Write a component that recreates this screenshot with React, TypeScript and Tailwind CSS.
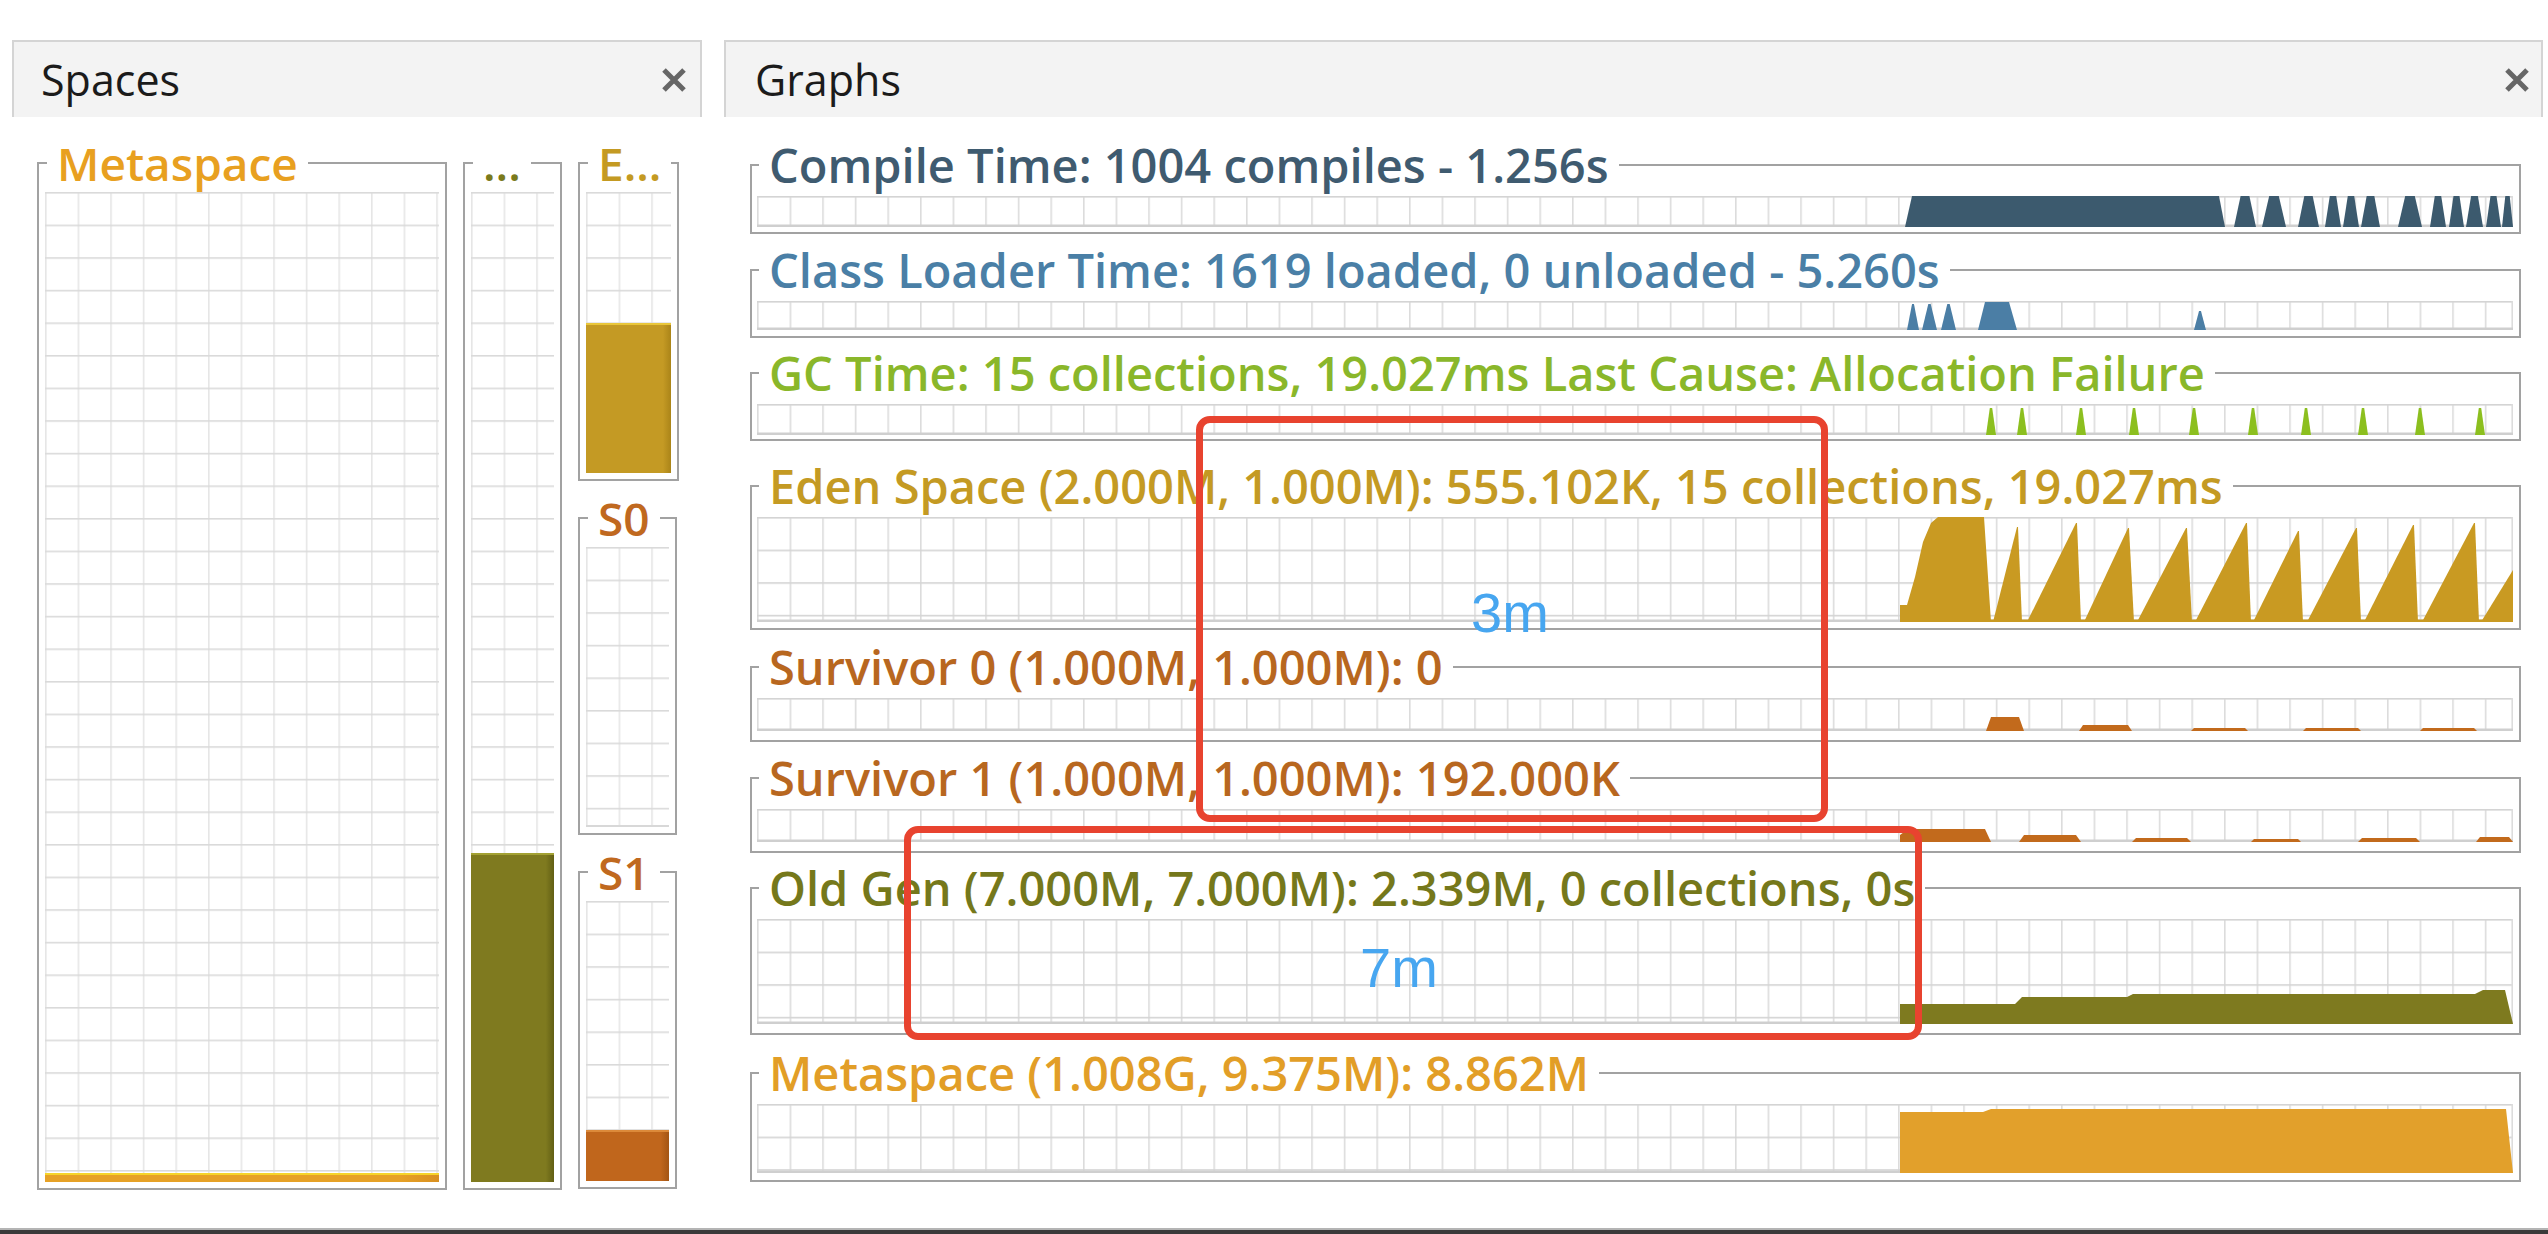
import React from "react";

const G = 32.6;
const CW = 1756;

function GridPattern({ id, v = "#dcdcdc", h = "#d4d4d4" }: { id: string; v?: string; h?: string }) {
  return (
    <pattern id={id} width={G} height={G} patternUnits="userSpaceOnUse">
      <rect x={0} y={0} width={1.6} height={G} fill={v} />
      <rect x={0} y={0} width={G} height={1.6} fill={h} />
    </pattern>
  );
}

function CloseIcon() {
  return (
    <svg width="30" height="28" viewBox="0 0 30 28" className="block">
      <path d="M5 4 L25 24 M25 4 L5 24" stroke="#666666" strokeWidth="5" fill="none" />
    </svg>
  );
}

function Chart({ id, h, color, polys }: { id: string; h: number; color: string; polys: string[] }) {
  return (
    <svg width={CW} height={h} className="block">
      <defs>
        <GridPattern id={id} />
      </defs>
      <rect x={0} y={0} width={CW} height={h} fill="#ffffff" />
      <rect x={0} y={0} width={CW} height={h} fill={`url(#${id})`} />
      <rect x={CW - 1.6} y={0} width={1.6} height={h} fill="#dcdcdc" />
      <rect x={0} y={h - 2.5} width={CW} height={2.5} fill="#cfcfcf" />
      {polys.map((p, i) => (
        <polygon key={i} points={p} fill={color} />
      ))}
    </svg>
  );
}

function trap(a: number, b: number, hgt: number, H: number, inset = 4) {
  return `${a},${H} ${a + inset},${H - hgt} ${b - inset},${H - hgt} ${b},${H}`;
}

function spike(a: number, b: number, H: number, top = 0, ratio = 0.3) {
  const w = b - a;
  return `${a},${H} ${a + w * ratio},${top} ${b - w * ratio},${top} ${b},${H}`;
}

// ---- data ----
const compilePolys = [
  "1148,31 1155,0 1462,0 1468,31",
  ...[
    [1477, 1499],
    [1505, 1529],
    [1541, 1562],
    [1568, 1584],
    [1586, 1602],
    [1604, 1623],
    [1641, 1665],
    [1673, 1689],
    [1692, 1707],
    [1709, 1726],
    [1729, 1744],
    [1745, 1756],
  ].map(([a, b]) => spike(a, b, 31, 0, 0.3)),
];

const classPolys = [
  spike(1150, 1162, 29, 3, 0.42),
  spike(1165, 1180, 29, 3, 0.42),
  spike(1184, 1199, 29, 3, 0.42),
  "1221,29 1228,1 1252,1 1260,29",
  spike(1437, 1449, 29, 10, 0.42),
];

const gcPolys = [1234, 1265, 1324, 1377, 1437, 1496, 1549, 1606, 1663, 1723].map(
  (c) => `${c - 5},31 ${c - 1.2},4 ${c + 1.2},4 ${c + 5},31`
);

const edenH = 105;
const edenPolys = [
  "1143,105 1143,88 1150,88 1158,60 1166,25 1174,6 1181,0 1227,0 1234,105",
  ...[
    [1236, 1260, 1265, 10],
    [1270, 1319, 1324, 6],
    [1327, 1371, 1377, 11],
    [1380, 1429, 1435, 11],
    [1438, 1489, 1494, 6],
    [1496, 1541, 1546, 14],
    [1550, 1599, 1604, 11],
    [1607, 1656, 1661, 8],
    [1665, 1717, 1722, 6],
  ].map(([s, p, e, y]) => `${s},${edenH} ${p},${y} ${p + 1},${y} ${e},${edenH}`),
  `1724,${edenH} 1756,53 1756,${edenH}`,
  `1143,${edenH - 2.5} 1756,${edenH - 2.5} 1756,${edenH} 1143,${edenH}`,
];

const s0Polys = [
  trap(1229, 1267, 14, 33, 5),
  trap(1322, 1375, 6, 33, 4),
  trap(1434, 1491, 3, 33, 3),
  trap(1546, 1604, 3, 33, 3),
  trap(1663, 1720, 3, 33, 3),
];

const s1Polys = [
  "1143,33 1143,26 1151,20 1228,20 1234,33",
  trap(1262, 1324, 7, 33, 5),
  trap(1375, 1434, 4, 33, 4),
  trap(1494, 1544, 3, 33, 3),
  trap(1601, 1663, 4, 33, 4),
  trap(1719, 1756, 5, 33, 4),
];

const oldPolys = ["1143,105 1143,85 1258,85 1265,78 1370,78 1376,75 1718,75 1726,71 1748,71 1756,105"];

const metaPolys = ["1143,69 1143,8 1226,8 1234,5 1749,5 1756,69"];

function GraphRow({
  title,
  color,
  extra,
  children,
}: {
  title: string;
  color: string;
  extra: string;
  children: React.ReactNode;
}) {
  return (
    <fieldset className={`border-2 border-[#a2a2a2] pl-[5px] pr-[6px] pt-[9px] ${extra}`}>
      <legend className={`ml-[2px] px-[10px] text-[47px] leading-[44px] font-semibold whitespace-nowrap ${color}`}>
        {title}
      </legend>
      {children}
    </fieldset>
  );
}

function SpaceGrid({
  id,
  h,
  bar,
}: {
  id: string;
  h: number;
  bar?: { y: number; h: number; color: string; top: string; dark: string };
}) {
  return (
    <svg width="100%" height={h} className="block">
      <defs>
        <GridPattern id={id} v="#e6e6e6" h="#dadada" />
        {bar && (
          <linearGradient id={`${id}-g`} x1="0" x2="1" y1="0" y2="0">
            <stop offset="0" stopColor={bar.color} />
            <stop offset="0.9" stopColor={bar.color} />
            <stop offset="1" stopColor={bar.dark} />
          </linearGradient>
        )}
      </defs>
      <rect x={0} y={0} width="100%" height={h} fill="#ffffff" />
      <rect x={0} y={0} width="100%" height={h} fill={`url(#${id})`} />
      <rect x={0} y={h - 2} width="100%" height={2} fill="#d8d8d8" />
      {bar && (
        <>
          <rect x={0} y={bar.y} width="100%" height={bar.h} fill={`url(#${id}-g)`} />
          <rect x={0} y={bar.y} width="100%" height={2} fill={bar.top} />
        </>
      )}
    </svg>
  );
}

function SpaceBox({
  title,
  color,
  width,
  children,
}: {
  title: string;
  color: string;
  width: string;
  children: React.ReactNode;
}) {
  return (
    <fieldset className={`border-2 border-[#a2a2a2] px-[6px] pt-[7px] pb-[6px] ${width}`}>
      <legend className={`ml-[2px] px-[10px] text-[46px] leading-[44px] font-semibold whitespace-nowrap ${color}`}>
        {title}
      </legend>
      {children}
    </fieldset>
  );
}

export default function App() {
  return (
    <div className="relative w-[2548px] h-[1234px] overflow-hidden bg-white font-['Open_Sans',sans-serif]">
      <div className="flex h-[1228px] pt-[40px] pl-[12px]">
        {/* Spaces panel */}
        <div className="flex w-[690px] shrink-0 flex-col">
          <div className="flex h-[77px] items-center justify-between border-x-2 border-t-2 border-[#d4d4d4] bg-[#f3f3f3] pl-[27px] pr-[11px]">
            <span className="text-[43px] leading-none text-[#1b1b1b]">Spaces</span>
            <CloseIcon />
          </div>
          <div className="flex gap-[16px] pl-[25px] pt-[24px]">
            <SpaceBox title="Metaspace" color="text-[#e8a020]" width="w-[410px]">
              <SpaceGrid
                id="sp-meta"
                h={990}
                bar={{ y: 981, h: 9, color: "#e6a126", top: "#f6d42a", dark: "#d99020" }}
              />
            </SpaceBox>
            <SpaceBox title="..." color="text-[#7a7a1c]" width="w-[99px]">
              <SpaceGrid
                id="sp-old"
                h={990}
                bar={{ y: 661, h: 329, color: "#7f7a1f", top: "#a3a133", dark: "#625f14" }}
              />
            </SpaceBox>
            <div className="flex w-[99px] flex-col gap-[15px]">
              <SpaceBox title="E..." color="text-[#c49a22]" width="w-[99px]">
                <SpaceGrid
                  id="sp-eden"
                  h={281}
                  bar={{ y: 131, h: 150, color: "#c49a24", top: "#e9c63a", dark: "#a98318" }}
                />
              </SpaceBox>
              <SpaceBox title="S0" color="text-[#c0691f]" width="w-[99px]">
                <SpaceGrid id="sp-s0" h={280} />
              </SpaceBox>
              <SpaceBox title="S1" color="text-[#c0691f]" width="w-[99px]">
                <SpaceGrid
                  id="sp-s1"
                  h={280}
                  bar={{ y: 229, h: 51, color: "#c0661c", top: "#dc8a3a", dark: "#a35514" }}
                />
              </SpaceBox>
            </div>
          </div>
        </div>

        {/* Graphs panel */}
        <div className="ml-[22px] flex w-[1819px] shrink-0 flex-col">
          <div className="flex h-[77px] items-center justify-between border-x-2 border-t-2 border-[#d4d4d4] bg-[#f3f3f3] pl-[29px] pr-[9px]">
            <span className="text-[43px] leading-none text-[#1b1b1b]">Graphs</span>
            <CloseIcon />
          </div>
          <div className="flex flex-col pl-[26px] pr-[22px] pt-[26px]">
            <GraphRow title="Compile Time: 1004 compiles - 1.256s" color="text-[#3f5b70]" extra="pb-[5px]">
              <Chart id="c-compile" h={31} color="#3c5a6e" polys={compilePolys} />
            </GraphRow>
            <GraphRow
              title="Class Loader Time: 1619 loaded, 0 unloaded - 5.260s"
              color="text-[#4a7fa6]"
              extra="mt-[14px] pb-[6px]"
            >
              <Chart id="c-class" h={29} color="#4b7ea5" polys={classPolys} />
            </GraphRow>
            <GraphRow
              title="GC Time: 15 collections, 19.027ms Last Cause: Allocation Failure"
              color="text-[#8ab72a]"
              extra="mt-[13px] pb-[4px]"
            >
              <Chart id="c-gc" h={31} color="#8cbf1f" polys={gcPolys} />
            </GraphRow>
            <GraphRow
              title="Eden Space (2.000M, 1.000M): 555.102K, 15 collections, 19.027ms"
              color="text-[#c49a23]"
              extra="mt-[23px] pb-[6px]"
            >
              <Chart id="c-eden" h={105} color="#c99a22" polys={edenPolys} />
            </GraphRow>
            <GraphRow title="Survivor 0 (1.000M, 1.000M): 0" color="text-[#b8671f]" extra="mt-[15px] pb-[9px]">
              <Chart id="c-s0" h={33} color="#c26a1c" polys={s0Polys} />
            </GraphRow>
            <GraphRow
              title="Survivor 1 (1.000M, 1.000M): 192.000K"
              color="text-[#b8671f]"
              extra="mt-[14px] pb-[9px]"
            >
              <Chart id="c-s1" h={33} color="#c26a1c" polys={s1Polys} />
            </GraphRow>
            <GraphRow
              title="Old Gen (7.000M, 7.000M): 2.339M, 0 collections, 0s"
              color="text-[#75781b]"
              extra="mt-[13px] pb-[9px]"
            >
              <Chart id="c-old" h={105} color="#7e7a1f" polys={oldPolys} />
            </GraphRow>
            <GraphRow
              title="Metaspace (1.008G, 9.375M): 8.862M"
              color="text-[#e29e27]"
              extra="mt-[16px] pb-[7px]"
            >
              <Chart id="c-meta" h={69} color="#e2a02b" polys={metaPolys} />
            </GraphRow>
          </div>
        </div>
      </div>
      <div className="h-[2px] bg-[#b4b4b4]" />
      <div className="h-[4px] bg-[#3a3a3a]" />

      {/* annotations */}
      <div className="absolute left-[1196px] top-[416px] h-[406px] w-[632px] rounded-[14px] border-[7px] border-[#e8432f]" />
      <div className="absolute left-[904px] top-[826px] h-[214px] w-[1018px] rounded-[14px] border-[7px] border-[#e8432f]" />
      <div className="absolute left-[1471px] top-[585px] font-['Liberation_Sans',sans-serif] text-[56px] leading-none text-[#47a6f0]">
        3m
      </div>
      <div className="absolute left-[1360px] top-[940px] font-['Liberation_Sans',sans-serif] text-[56px] leading-none text-[#47a6f0]">
        7m
      </div>
    </div>
  );
}
